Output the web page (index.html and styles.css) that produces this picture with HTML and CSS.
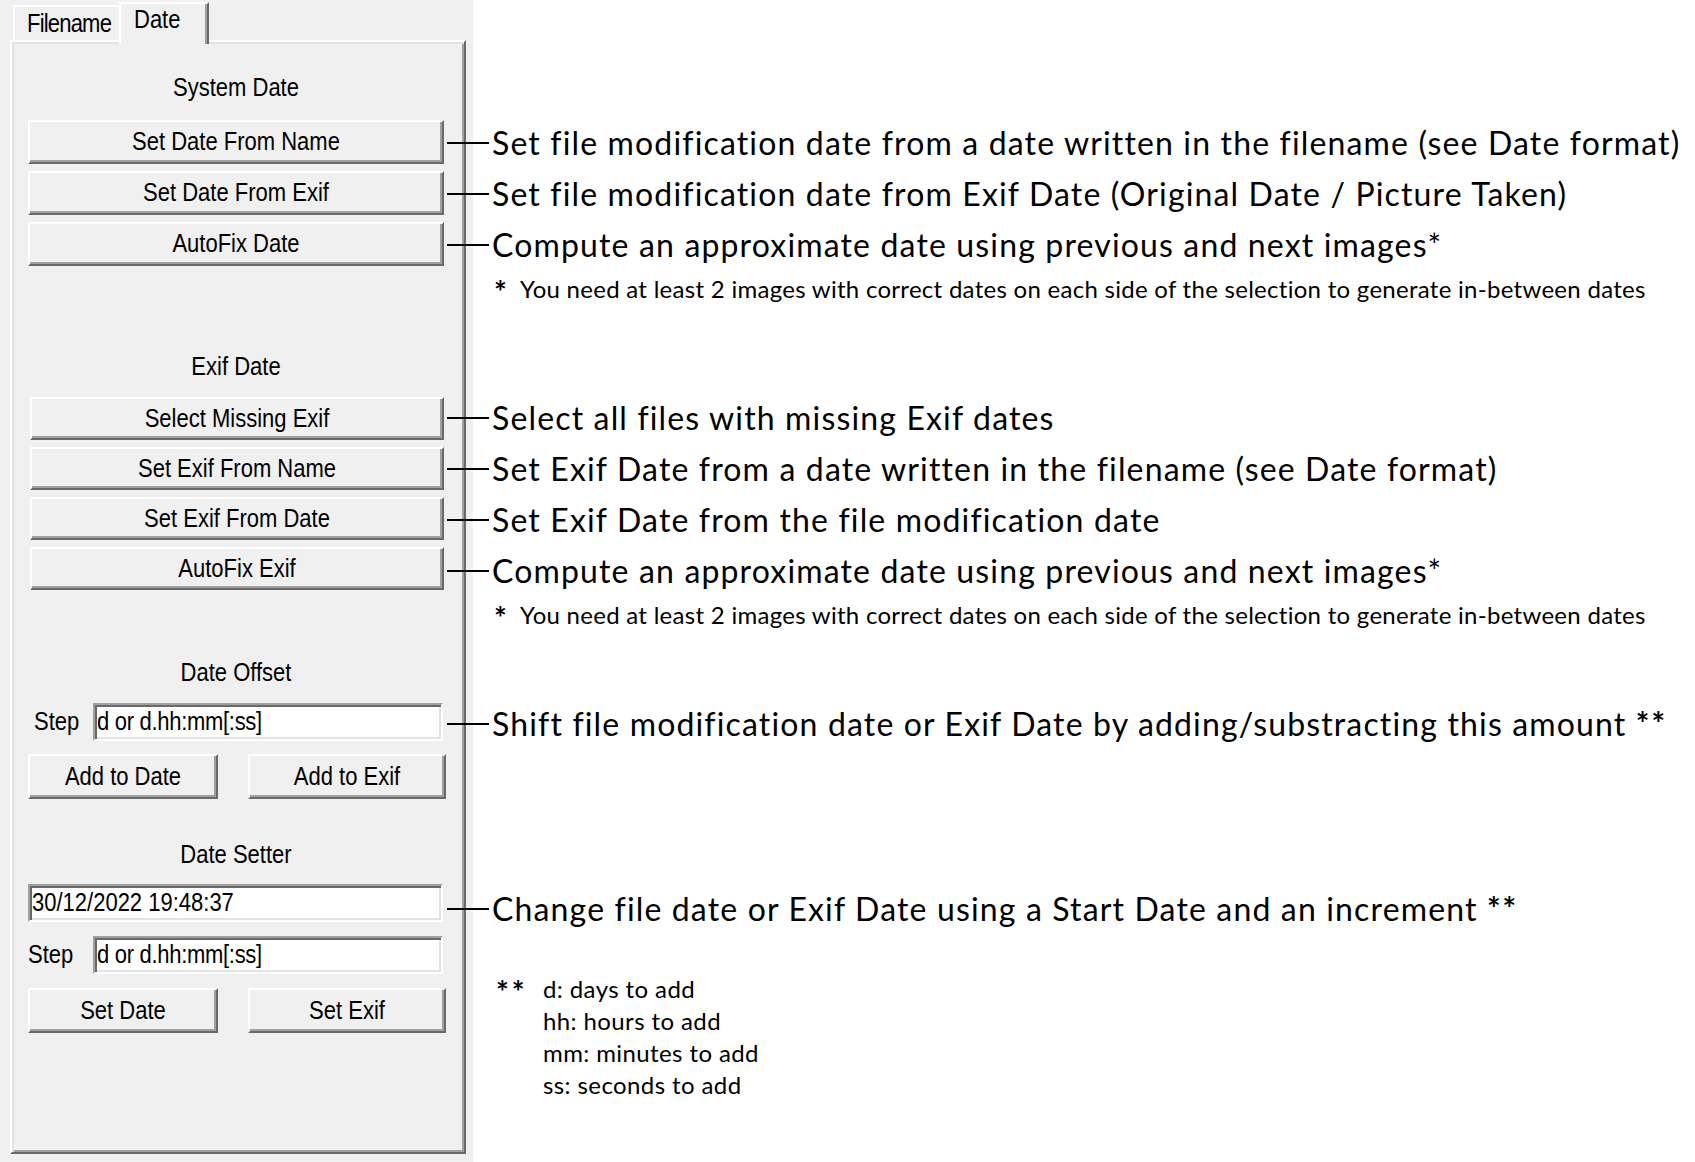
FILE: index.html
```html
<!DOCTYPE html>
<html lang="en">
<head>
<meta charset="utf-8">
<title>Date tools</title>
<link rel="stylesheet" href="styles.css">
</head>
<body>
<div class="page">
  <div class="left">
    <div class="tabs">
      <div class="tab"><span class="txt tab-txt">Filename</span></div>
      <div class="tab active"><span class="txt">Date</span></div>
    </div>
    <div class="panel">
      <div class="group-title title-system"><span class="txt">System Date</span></div>
      <div class="btn-stack stack-system">
        <button class="btn"><span class="txt">Set Date From Name</span></button>
        <button class="btn"><span class="txt">Set Date From Exif</span></button>
        <button class="btn"><span class="txt">AutoFix Date</span></button>
      </div>

      <div class="group-title title-exif"><span class="txt">Exif Date</span></div>
      <div class="btn-stack stack-exif">
        <button class="btn"><span class="txt">Select Missing Exif</span></button>
        <button class="btn"><span class="txt">Set Exif From Name</span></button>
        <button class="btn"><span class="txt">Set Exif From Date</span></button>
        <button class="btn"><span class="txt">AutoFix Exif</span></button>
      </div>

      <div class="group-title title-offset"><span class="txt">Date Offset</span></div>
      <div class="step-row step-offset">
        <span class="step-label"><span class="txt">Step</span></span>
        <div class="field step-field"><span class="txt step-txt">d or d.hh:mm[:ss]</span></div>
      </div>
      <div class="btn-pair">
        <button class="btn btn-half-a"><span class="txt">Add to Date</span></button>
        <button class="btn btn-half-b"><span class="txt">Add to Exif</span></button>
      </div>

      <div class="group-title title-setter"><span class="txt">Date Setter</span></div>
      <div class="field date-field"><span class="txt">30/12/2022 19:48:37</span></div>
      <div class="step-row step-setter">
        <span class="step-label"><span class="txt">Step</span></span>
        <div class="field step-field"><span class="txt step-txt">d or d.hh:mm[:ss]</span></div>
      </div>
      <div class="btn-pair">
        <button class="btn btn-half-a"><span class="txt">Set Date</span></button>
        <button class="btn btn-half-b"><span class="txt">Set Exif</span></button>
      </div>
    </div>
  </div>

  <div class="right">
    <div class="ann-group ann-system">
      <div class="note">Set file modification date from a date written in the filename (see Date format)</div>
      <div class="note">Set file modification date from Exif Date (Original Date / Picture Taken)</div>
      <div class="note">Compute an approximate date using previous and next images*</div>
      <div class="foot"><span class="star">*</span><span>You need at least 2 images with correct dates on each side of the selection to generate in-between dates</span></div>
    </div>
    <div class="ann-group ann-exif">
      <div class="note">Select all files with missing Exif dates</div>
      <div class="note">Set Exif Date from a date written in the filename (see Date format)</div>
      <div class="note">Set Exif Date from the file modification date</div>
      <div class="note">Compute an approximate date using previous and next images*</div>
      <div class="foot"><span class="star">*</span><span>You need at least 2 images with correct dates on each side of the selection to generate in-between dates</span></div>
    </div>
    <div class="ann-group ann-offset">
      <div class="note">Shift file modification date or Exif Date by adding/substracting this amount <span class="dstar">**</span></div>
    </div>
    <div class="ann-group ann-setter">
      <div class="note">Change file date or Exif Date using a Start Date and an increment <span class="dstar">**</span></div>
    </div>
    <div class="legend">
      <span class="legend-mark">**</span>
      <div class="legend-lines">
        <div>d: days to add</div>
        <div>hh: hours to add</div>
        <div>mm: minutes to add</div>
        <div>ss: seconds to add</div>
      </div>
    </div>
  </div>
</div>
</body>
</html>
```

FILE: styles.css
```css
* { box-sizing: border-box; }

html, body {
  margin: 0;
  padding: 0;
  background: #ffffff;
}

body {
  width: 1695px;
  height: 1162px;
  overflow: hidden;
}

.page {
  display: flex;
  height: 1162px;
}

/* ---------- Left: Windows style tab panel ---------- */
.left {
  width: 473px;
  flex: none;
  background: #f0f0f0;
  font-family: "Liberation Sans", Arial, sans-serif;
  font-size: 22px;
  color: #000;
}

/* the dialog font is rendered tall and narrow */
.txt {
  display: inline-block;
  transform: scaleY(1.18);
  white-space: nowrap;
}

.tab-txt { letter-spacing: -0.8px; }
.step-txt { letter-spacing: -0.3px; }

.tabs {
  display: flex;
  align-items: flex-end;
  height: 40px;
  padding-left: 13px;
}

.tab {
  width: 106px;
  height: 35px;
  padding: 2px 0 0 12px;
  line-height: 30px;
  background: #f0f0f0;
  border-top: 2px solid #ffffff;
  border-left: 2px solid #ffffff;
  white-space: nowrap;
}

.tab.active {
  position: relative;
  z-index: 1;
  width: 90px;
  height: 42px;
  margin-bottom: -4px;
  padding: 1px 0 0 13px;
  border-right: 2px solid #696969;
  box-shadow: inset -2px 0 #a0a0a0;
}

.panel {
  margin-left: 10px;
  width: 456px;
  height: 1114px;
  border: 2px solid;
  border-color: #ffffff #696969 #696969 #ffffff;
  box-shadow: inset 2px 2px #e3e3e3, inset -2px -2px #a0a0a0;
  padding: 0 20px 0 16px;
  display: flex;
  flex-direction: column;
}

.group-title {
  height: 30px;
  line-height: 30px;
  text-align: center;
  white-space: nowrap;
}

.title-system { margin-top: 31px; }
.title-exif { margin-top: 86px; }
.title-offset { margin-top: 68px; }
.title-setter { margin-top: 41px; }

.btn {
  font: inherit;
  color: #000;
  margin: 0;
  padding: 0;
  background: #f0f0f0;
  border: 2px solid;
  border-color: #ffffff #696969 #696969 #ffffff;
  box-shadow: inset -2px -2px #a0a0a0;
  text-align: center;
  white-space: nowrap;
  appearance: none;
  -webkit-appearance: none;
  border-radius: 0;
}

.btn-stack {
  display: flex;
  flex-direction: column;
  gap: 7px;
}

.stack-system { margin-top: 17px; }
.stack-system .btn { height: 44px; }

.stack-exif { margin-top: 15px; margin-left: 2px; }
.stack-exif .btn { height: 43px; }

.step-row {
  display: flex;
  align-items: center;
  justify-content: space-between;
  height: 38px;
  margin-right: 1px;
}

.step-offset { margin-top: 15px; }
.step-offset .step-label { padding-left: 6px; }
.step-setter { margin-top: 14px; }

.step-label {
  white-space: nowrap;
  line-height: 30px;
}

.field {
  display: flex;
  align-items: center;
  height: 38px;
  padding: 0 2px;
  background: #ffffff;
  border: 2px solid;
  border-color: #a0a0a0 #ffffff #ffffff #a0a0a0;
  box-shadow: inset 2px 2px #696969, inset -2px -2px #e3e3e3;
  white-space: nowrap;
  overflow: hidden;
}

.step-field { width: 350px; }

.date-field {
  width: 415px;
  margin-top: 14px;
}

.btn-pair {
  display: flex;
  gap: 30px;
  margin-top: 13px;
  margin-right: -2px;
}

.step-setter + .btn-pair { margin-top: 14px; }

.btn-pair .btn { height: 45px; }
.btn-half-a { width: 190px; }
.btn-half-b { width: 198px; }

/* ---------- Right: annotations ---------- */
.right {
  flex: 1;
  padding-left: 19px;
  font-family: Lato, "Open Sans", sans-serif;
  color: #000;
  background: #ffffff;
}

.note {
  position: relative;
  height: 50px;
  line-height: 50px;
  font-size: 32px;
  letter-spacing: 1.15px;
  white-space: nowrap;
}

.note + .note { margin-top: 1px; }

.note::before {
  content: "";
  position: absolute;
  left: -45px;
  top: 24px;
  width: 42px;
  height: 2px;
  background: #000;
}

.dstar {
  font-weight: 700;
  letter-spacing: 2px;
}

.foot {
  display: flex;
  margin-top: 4px;
  margin-left: 2px;
  height: 30px;
  line-height: 30px;
  font-size: 24px;
  letter-spacing: 0.28px;
  white-space: nowrap;
}

.star {
  width: 26px;
  flex: none;
  font-weight: 700;
  font-size: 30px;
  line-height: 34px;
}

.ann-system { margin-top: 118px; }
.ann-exif { margin-top: 89px; }
.ann-offset { margin-top: 69px; }
.ann-setter { margin-top: 135px; }

.legend {
  display: grid;
  grid-template-columns: 47px auto;
  margin-top: 39px;
  margin-left: 4px;
  font-size: 24px;
  letter-spacing: 0.4px;
  line-height: 32px;
  white-space: nowrap;
}

.legend-mark {
  font-weight: 700;
  font-size: 30px;
  line-height: 36px;
  letter-spacing: 3px;
}
```
